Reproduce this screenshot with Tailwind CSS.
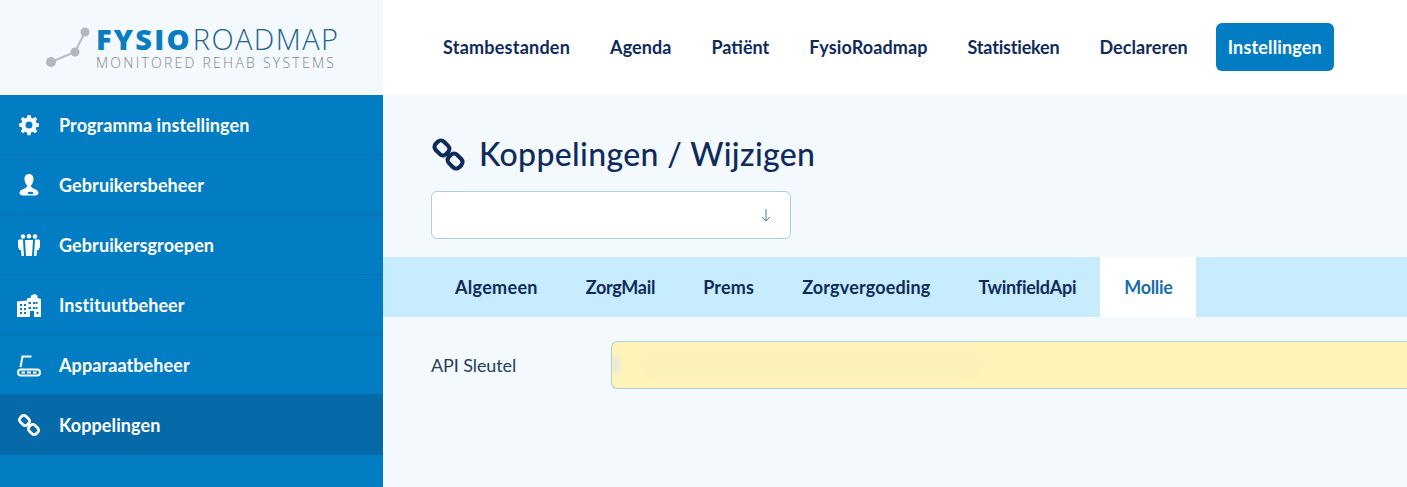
<!DOCTYPE html>
<html lang="en">
<head>
    <meta charset="UTF-8">
    <meta name="viewport" content="width=device-width, initial-scale=1.0">
    <title>FysioRoadmap</title>
    <script src="https://cdn.jsdelivr.net/npm/@tailwindcss/browser@4"></script>
</head>
<body class="h-[487px] overflow-hidden bg-[#f3f9fd] font-['Lato',sans-serif] text-[#0f2b5b]">
<div class="flex h-[487px]">

    <!-- Sidebar -->
    <aside class="w-[383px] shrink-0 flex flex-col bg-[#027dc3]">
        <div class="h-[95px] shrink-0 bg-[#f3f9fd] flex items-start pl-[45px] pt-[26px] gap-[5px]">
            <svg width="46" height="44" viewBox="0 0 46 44" class="shrink-0">
                <path d="M6 36 L30 26 L40 6" fill="none" stroke="#b9bcc2" stroke-width="2"/>
                <circle cx="6" cy="36" r="5" fill="#b4b7bd"/>
                <circle cx="30" cy="26" r="4.500" fill="#b4b7bd"/>
                <circle cx="40" cy="6" r="4.500" fill="#b4b7bd"/>
            </svg>
            <div class="flex flex-col font-['Open_Sans',sans-serif] whitespace-nowrap">
                <div class="flex items-baseline text-[29px] leading-[26px] h-[30px]">
                    <span class="font-extrabold text-[#0a7dc2] tracking-[2.200px] mr-[1px]">FYSIO</span><span class="font-light text-[#23628f] tracking-[1.400px]">ROADMAP</span>
                </div>
                <div class="text-[14px] leading-[14px] font-light text-[#7e8589] tracking-[2.250px]">MONITORED REHAB SYSTEMS</div>
            </div>
        </div>

        <nav class="flex flex-col text-white font-bold text-[18px] tracking-[0.1px]">
            <a class="h-[60px] flex items-center gap-[18px] px-[17px] border-b border-[#0a6fac]">
                <svg class="w-6 h-6" viewBox="0 0 24 24" fill="#fff"><path fill-rule="evenodd" d="M10.500 2h3l.5 2.600 1.900.8 2.200-1.500 2.100 2.100-1.500 2.200.8 1.900 2.500.5v3l-2.500.5-.8 1.900 1.500 2.200-2.100 2.100-2.200-1.500-1.900.8-.5 2.600h-3l-.5-2.600-1.900-.8-2.200 1.500-2.100-2.100 1.500-2.200-.8-1.900-2.500-.5v-3l2.500-.5.8-1.900-1.500-2.200 2.100-2.100 2.200 1.500 1.900-.8zM12 8.500a3.500 3.500 0 1 0 0 7 3.500 3.500 0 0 0 0-7z"/></svg>
                <span class="mt-[2px]">Programma instellingen</span>
            </a>
            <a class="h-[60px] flex items-center gap-[18px] px-[17px] border-b border-[#0a6fac]">
                <svg class="w-6 h-6" viewBox="0 0 24 24" fill="#fff"><path d="M12 1c3 0 4.500 2.300 4.500 5s-1.200 5-2.500 6.500c0 1.500.5 2 2.500 3 2.500 1 5 2 5 4.500 0 1.500-1.500 2.500-3 2.500H6c-2 0-3.500-1-3.500-2.500 0-2.500 2.500-3.500 5-4.500 2-1 2.500-1.500 2.500-3C8.700 11 7.500 8.700 7.500 6s1.500-5 4.500-5z"/><ellipse cx="13.500" cy="20" rx="3" ry="1.300" fill="#027dc3"/></svg>
                <span class="mt-[2px]">Gebruikersbeheer</span>
            </a>
            <a class="h-[60px] flex items-center gap-[18px] px-[17px] border-b border-[#0a6fac]">
                <svg class="w-6 h-6" viewBox="0 0 24 24" fill="#fff"><circle cx="6" cy="3.500" r="2.200"/><circle cx="12" cy="3.200" r="2.200"/><circle cx="18" cy="3.500" r="2.200"/><path d="M1 8c0-1 .8-1.500 1.500-1.500H6l.5 9L7 23H4.500L4 17H2.500L1 14z"/><path d="M23 8c0-1-.8-1.500-1.500-1.500H18l-.5 9L17 23h2.500l.5-6h1.500L23 14z"/><path d="M8 7h8l-.5 8.500-.5 7.500H9l-.5-7.500z"/></svg>
                <span class="mt-[2px]">Gebruikersgroepen</span>
            </a>
            <a class="h-[60px] flex items-center gap-[18px] px-[17px] border-b border-[#0a6fac]">
                <svg class="w-6 h-6" viewBox="0 0 24 24" fill="#fff"><path fill-rule="evenodd" d="M10 5.500l4-1V2.500l3.500-1.500 3 1.500V5l3.500 1v18H0V8.500l10-1zM3 11v2h2v-2zm4 0v2h2v-2zm4.500-2v2h2.500V9zm4.500 0v2h2.500V9zm4.500 2v-2H19v2zM3 15v2h2v-2zm4 0v2h2v-2zm4.500-1v2h2.500v-2zm4.500 0v2h2.500v-2zm4.500 2v-2H19v2zM3 19v2h2v-2zm4 0v2h2v-2zm6-1v6h4v-6zm6.500 1v2h2v-2z"/></svg>
                <span class="mt-[2px]">Instituutbeheer</span>
            </a>
            <a class="h-[59px] flex items-center gap-[18px] px-[17px]">
                <svg class="w-6 h-6" viewBox="0 0 24 24" fill="none" stroke="#fff"><path d="M3.500 14L5.500 3.500H14.500" stroke-width="2"/><rect x="1" y="16.500" width="22" height="6" rx="3" stroke-width="2"/><path d="M4.500 19.500h3.500M10 19.500h4M16 19.500h3.500" stroke-width="2"/></svg>
                <span class="mt-[2px]">Apparaatbeheer</span>
            </a>
            <a class="h-[61px] flex items-center gap-[18px] px-[17px] bg-[#0669a8]">
                <svg class="w-6 h-6" viewBox="0 0 24 24" fill="none" stroke="#fff" stroke-width="2.800"><rect x="2.500" y="3.500" width="10" height="8" rx="3" transform="rotate(45 7.500 7.500)"/><rect x="11.500" y="12.500" width="10" height="8" rx="3" transform="rotate(45 16.500 16.500)"/><path d="M10.500 10.500l3 3"/></svg>
                <span class="mt-[2px]">Koppelingen</span>
            </a>
        </nav>
    </aside>

    <!-- Main -->
    <div class="flex-1 min-w-0 flex flex-col">
        <header class="h-[95px] shrink-0 bg-white flex items-start pt-[23px] pl-[48px] text-[18px] font-bold tracking-[0.15px] gap-[16px]">
            <a class="h-12 px-3 flex items-center tracking-[0.23px]">Stambestanden</a>
            <a class="h-12 px-3 flex items-center tracking-[0.07px]">Agenda</a>
            <a class="h-12 px-3 flex items-center tracking-[0px]">Patiënt</a>
            <a class="h-12 px-3 flex items-center tracking-[0.11px]">FysioRoadmap</a>
            <a class="h-12 px-3 flex items-center tracking-[-0.18px]">Statistieken</a>
            <a class="h-12 px-3 flex items-center tracking-[0.05px]">Declareren</a>
            <a class="h-12 px-3 flex items-center bg-[#027dc3] text-white rounded-md">Instellingen</a>
        </header>

        <div class="pt-[22px] pl-[48px] flex items-center gap-[13px] h-[96px]">
            <svg class="w-[35px] h-[35px]" viewBox="0 0 24 24" fill="none" stroke="#0f2b5b" stroke-width="2.800"><rect x="2.500" y="3.500" width="10" height="8" rx="3" transform="rotate(45 7.500 7.500)"/><rect x="11.500" y="12.500" width="10" height="8" rx="3" transform="rotate(45 16.500 16.500)"/><path d="M10.500 10.500l3 3"/></svg>
            <h1 class="text-[32px] font-medium leading-none tracking-[0.35px]">Koppelingen / Wijzigen</h1>
        </div>

        <div class="ml-[48px] w-[360px] h-12 bg-white border border-[#a9d0e2] rounded-md flex items-center justify-end pr-[17px] text-[#3f86ad]">
            <svg class="w-[14px] h-[14px]" viewBox="0 0 14 14" fill="none" stroke="currentColor" stroke-width="1"><path d="M7 1v12M3 9l4 4 4-4"/></svg>
        </div>

        <div class="mt-[18px] h-[60px] bg-[#c7ecfd] pl-[48px] flex text-[18px] font-bold">
            <a class="px-6 flex items-center tracking-[0.3px]">Algemeen</a>
            <a class="px-6 flex items-center tracking-[-0.3px]">ZorgMail</a>
            <a class="px-6 flex items-center tracking-[0.2px]">Prems</a>
            <a class="px-6 flex items-center tracking-[0.15px]">Zorgvergoeding</a>
            <a class="px-6 flex items-center tracking-[-0.25px]">TwinfieldApi</a>
            <a class="px-6 flex items-center bg-white text-[#1a6ea8] tracking-[-0.35px]">Mollie</a>
        </div>

        <div class="mt-6 pl-[48px] flex items-center">
            <label class="w-[180px] shrink-0 text-[18px] text-[#253f5e] tracking-[-0.1px]">API Sleutel</label>
            <div class="flex-1 h-12 bg-[#fff4b8] border border-[#a9d0e2] border-r-0 rounded-l-md flex items-center overflow-hidden">
                <div class="w-[8px] h-[16px] bg-[#e9e9d8] blur-[2px] shrink-0"></div>
                <div class="ml-[22px] w-[340px] h-5 bg-[#f9f0bb] blur-sm"></div>
            </div>
        </div>
    </div>
</div>
</body>
</html>
